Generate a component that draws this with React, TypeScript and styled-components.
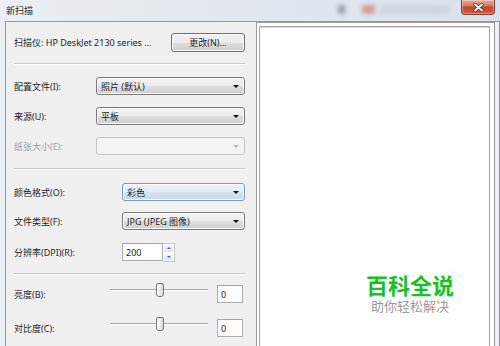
import React from "react";
import styled, { createGlobalStyle } from "styled-components";

const GlobalStyle = createGlobalStyle`
  html, body {
    margin: 0;
    padding: 0;
    background: #e4e9ef;
  }
  body {
    font-family: "Noto Sans", "Noto Sans CJK SC", sans-serif;
    font-size: 9px;
    color: #1e1e1e;
  }
`;

const Window = styled.div`
  width: 500px;
  height: 346px;
  overflow: hidden;
  display: flex;
  flex-direction: column;
  background: linear-gradient(90deg, #eceff3 0%, #e2e8ee 45%, #d9e2ec 100%);
`;

const TitleBar = styled.div`
  position: relative;
  height: 21px;
  flex: none;
  display: flex;
  align-items: center;
  padding-left: 6px;
`;

const Title = styled.span`
  font-size: 9px;
  color: #222;
  margin-top: -1px;
`;

const Blur = styled.span<{ $left: number; $width: number; $color: string }>`
  position: absolute;
  top: 5px;
  left: ${(p) => p.$left}px;
  width: ${(p) => p.$width}px;
  height: 9px;
  background: ${(p) => p.$color};
  filter: blur(2px);
  opacity: 0.5;
`;

const CloseButton = styled.div`
  position: absolute;
  top: 0;
  right: 5px;
  width: 34px;
  height: 15px;
  box-sizing: border-box;
  border: 1px solid #8a3a2c;
  border-top: none;
  border-radius: 0 0 4px 4px;
  background: linear-gradient(180deg, #e9a99a 0%, #d77a64 40%, #c3442c 52%, #cf5b3f 100%);
  box-shadow: inset 0 0 0 1px rgba(255, 255, 255, 0.35);
  display: flex;
  align-items: center;
  justify-content: center;
`;

const Client = styled.div`
  flex: 1;
  display: flex;
  margin: 0 0 0 5px;
  border: 1px solid #8f9aa6;
  border-bottom: none;
  background: #f0f0f0;
  min-height: 0;
`;

const Settings = styled.div`
  width: 250px;
  flex: none;
  box-sizing: border-box;
  padding: 0 11px 0 8px;
  display: flex;
  flex-direction: column;
`;

const ScannerRow = styled.div`
  margin-top: 11px;
  height: 19px;
  display: flex;
  align-items: center;
  justify-content: space-between;
`;

const Text = styled.span<{ $disabled?: boolean }>`
  color: ${(p) => (p.$disabled ? "#a0a0a0" : "#1e1e1e")};
  white-space: nowrap;
`;

const PushButton = styled.div`
  width: 74px;
  height: 19px;
  box-sizing: border-box;
  border: 1px solid #707070;
  border-radius: 3px;
  background: linear-gradient(180deg, #f2f2f2 0%, #ebebeb 50%, #dddddd 51%, #cfcfcf 100%);
  box-shadow: inset 0 0 0 1px #fbfbfb;
  display: flex;
  align-items: center;
  justify-content: center;
`;

const Divider = styled.div<{ $top: number }>`
  margin-top: ${(p) => p.$top}px;
  height: 0;
  border-top: 1px solid #c9c9c9;
  border-bottom: 1px solid #ffffff;
`;

const FieldRow = styled.div<{ $top: number; $label: number }>`
  margin-top: ${(p) => p.$top}px;
  height: 18px;
  display: grid;
  grid-template-columns: ${(p) => p.$label}px 1fr;
  align-items: center;
`;

const Combo = styled.div<{ $state?: "normal" | "hot" | "disabled" }>`
  height: 18px;
  box-sizing: border-box;
  border-radius: 3px;
  border: 1px solid
    ${(p) =>
      p.$state === "disabled" ? "#c3c7ca" : p.$state === "hot" ? "#7a9cb8" : "#7a7a7a"};
  background: ${(p) =>
    p.$state === "disabled"
      ? "#f4f4f4"
      : p.$state === "hot"
      ? "linear-gradient(180deg, #eef4fa 0%, #e3edf6 50%, #d2e2ef 51%, #c6d9ea 100%)"
      : "linear-gradient(180deg, #f3f3f3 0%, #ebebeb 50%, #dedede 51%, #d0d0d0 100%)"};
  box-shadow: inset 0 0 0 1px ${(p) => (p.$state === "disabled" ? "#f4f4f4" : "#fafafa")};
  display: flex;
  align-items: center;
  justify-content: space-between;
  padding: 0 4px 0 4px;
`;

const Arrow = styled.span<{ $disabled?: boolean }>`
  width: 0;
  height: 0;
  border-left: 3px solid transparent;
  border-right: 3px solid transparent;
  border-top: 3px solid ${(p) => (p.$disabled ? "#b5b5b5" : "#111")};
  margin-right: 1px;
`;

const Spinner = styled.div`
  display: flex;
  height: 19px;
`;

const NumberBox = styled.div<{ $width: number }>`
  width: ${(p) => p.$width}px;
  height: 18px;
  box-sizing: border-box;
  border: 1px solid #abadb3;
  border-top-color: #a0a3ab;
  background: #fff;
  display: flex;
  align-items: center;
  padding-left: 3px;
`;

const SpinButtons = styled.div`
  width: 12px;
  display: flex;
  flex-direction: column;
  box-sizing: border-box;
  border: 1px solid #c2c2c2;
  border-left: none;
`;

const SpinHalf = styled.div<{ $up?: boolean }>`
  flex: 1;
  display: flex;
  align-items: center;
  justify-content: center;
  background: linear-gradient(180deg, #f5f5f5, #e4e4e4);
  border: 1px solid #fff;
  &::after {
    content: "";
    border-left: 2px solid transparent;
    border-right: 2px solid transparent;
    ${(p) => (p.$up ? "border-bottom: 2px solid #4b69a8;" : "border-top: 2px solid #4b69a8;")}
  }
`;

const SliderRow = styled.div<{ $top: number }>`
  margin-top: ${(p) => p.$top}px;
  height: 18px;
  display: grid;
  grid-template-columns: 96px 98px 1fr;
  align-items: center;
`;

const Slider = styled.div`
  position: relative;
  height: 14px;
  align-self: start;
  margin-top: -2px;
  display: flex;
  align-items: center;
`;

const Track = styled.div`
  width: 100%;
  height: 0;
  border-top: 1px solid #a8a8a8;
  border-bottom: 1px solid #ffffff;
`;

const Thumb = styled.div`
  position: absolute;
  top: 0;
  width: 8px;
  height: 14px;
  box-sizing: border-box;
  border: 1px solid #777;
  border-radius: 2px 2px 3px 3px;
  background: linear-gradient(90deg, #fdfdfd 0%, #e8e8e8 60%, #d4d4d4 100%);
`;

const ValueBox = styled(NumberBox)`
  margin-left: 9px;
`;

const Preview = styled.div`
  width: 239px;
  flex: none;
  box-sizing: border-box;
  border: 1px solid #9c9c9c;
  border-bottom: none;
  background: #fff;
  padding: 3px 4px 0 2px;
  display: flex;
  margin-right: 4px;
`;

const PreviewInner = styled.div`
  position: relative;
  flex: 1;
  border: 1px solid #a3a3a3;
  border-bottom: none;
  box-shadow: inset 0 1px 0 #d8d8d8;
  background: #fff;
`;

const Watermark = styled.div`
  position: absolute;
  left: 106px;
  top: 245px;
  display: flex;
  flex-direction: column;
  align-items: center;
`;

const Brand = styled.span`
  font-family: "Noto Sans CJK SC", sans-serif;
  font-size: 22px;
  font-weight: 700;
  line-height: 24px;
  color: #17c11f;
`;

const Slogan = styled.span`
  font-family: "Noto Sans CJK SC", sans-serif;
  font-size: 13px;
  line-height: 15px;
  margin-top: 2px;
  color: #9a9a9a;
`;

const SliderField = ({ label, top }: { label: string; top: number }) => {
  const value = 0;
  const pct = (value + 100) / 200;
  return (
    <SliderRow $top={top}>
      <Text>{label}</Text>
      <Slider>
        <Track />
        <Thumb style={{ left: `calc(${pct * 100}% - 3px)` }} />
      </Slider>
      <ValueBox $width={26}>{value}</ValueBox>
    </SliderRow>
  );
};

export default function App() {
  return (
    <>
      <GlobalStyle />
      <Window>
        <TitleBar>
          <Title>新扫描</Title>
          <Blur $left={338} $width={7} $color="#5e5e5e" />
          <Blur $left={362} $width={13} $color="#d2504a" />
          <Blur $left={380} $width={70} $color="#c4c8ce" />
          <CloseButton>
            <svg width="11" height="9" viewBox="0 0 11 9">
              <path
                d="M2 1.5 L9 7.5 M9 1.5 L2 7.5"
                stroke="#5a2a22"
                strokeWidth="3.2"
                strokeLinecap="round"
              />
              <path
                d="M2 1.5 L9 7.5 M9 1.5 L2 7.5"
                stroke="#ffffff"
                strokeWidth="1.8"
                strokeLinecap="round"
              />
            </svg>
          </CloseButton>
        </TitleBar>
        <Client>
          <Settings>
            <ScannerRow>
              <Text>扫描仪: HP DeskJet 2130 series ...</Text>
              <PushButton>更改(N)...</PushButton>
            </ScannerRow>
            <Divider $top={11} />

            <FieldRow $top={12} $label={82}>
              <Text>配置文件(I):</Text>
              <Combo>
                <Text>照片 (默认)</Text>
                <Arrow />
              </Combo>
            </FieldRow>
            <FieldRow $top={12} $label={82}>
              <Text>来源(U):</Text>
              <Combo>
                <Text>平板</Text>
                <Arrow />
              </Combo>
            </FieldRow>
            <FieldRow $top={12} $label={82}>
              <Text $disabled>纸张大小(E):</Text>
              <Combo $state="disabled">
                <span />
                <Arrow $disabled />
              </Combo>
            </FieldRow>
            <Divider $top={13} />

            <FieldRow $top={13} $label={108}>
              <Text>颜色格式(O):</Text>
              <Combo $state="hot">
                <Text>彩色</Text>
                <Arrow />
              </Combo>
            </FieldRow>
            <FieldRow $top={11} $label={108}>
              <Text>文件类型(F):</Text>
              <Combo>
                <Text>JPG (JPEG 图像)</Text>
                <Arrow />
              </Combo>
            </FieldRow>
            <FieldRow $top={13} $label={108}>
              <Text>分辨率(DPI)(R):</Text>
              <Spinner>
                <NumberBox $width={41}>200</NumberBox>
                <SpinButtons>
                  <SpinHalf $up />
                  <SpinHalf />
                </SpinButtons>
              </Spinner>
            </FieldRow>
            <Divider $top={12} />

            <SliderField label="亮度(B):" top={10} />
            <SliderField label="对比度(C):" top={16} />
          </Settings>
          <Preview>
            <PreviewInner>
              <Watermark>
                <Brand>百科全说</Brand>
                <Slogan>助你轻松解决</Slogan>
              </Watermark>
            </PreviewInner>
          </Preview>
        </Client>
      </Window>
    </>
  );
}
